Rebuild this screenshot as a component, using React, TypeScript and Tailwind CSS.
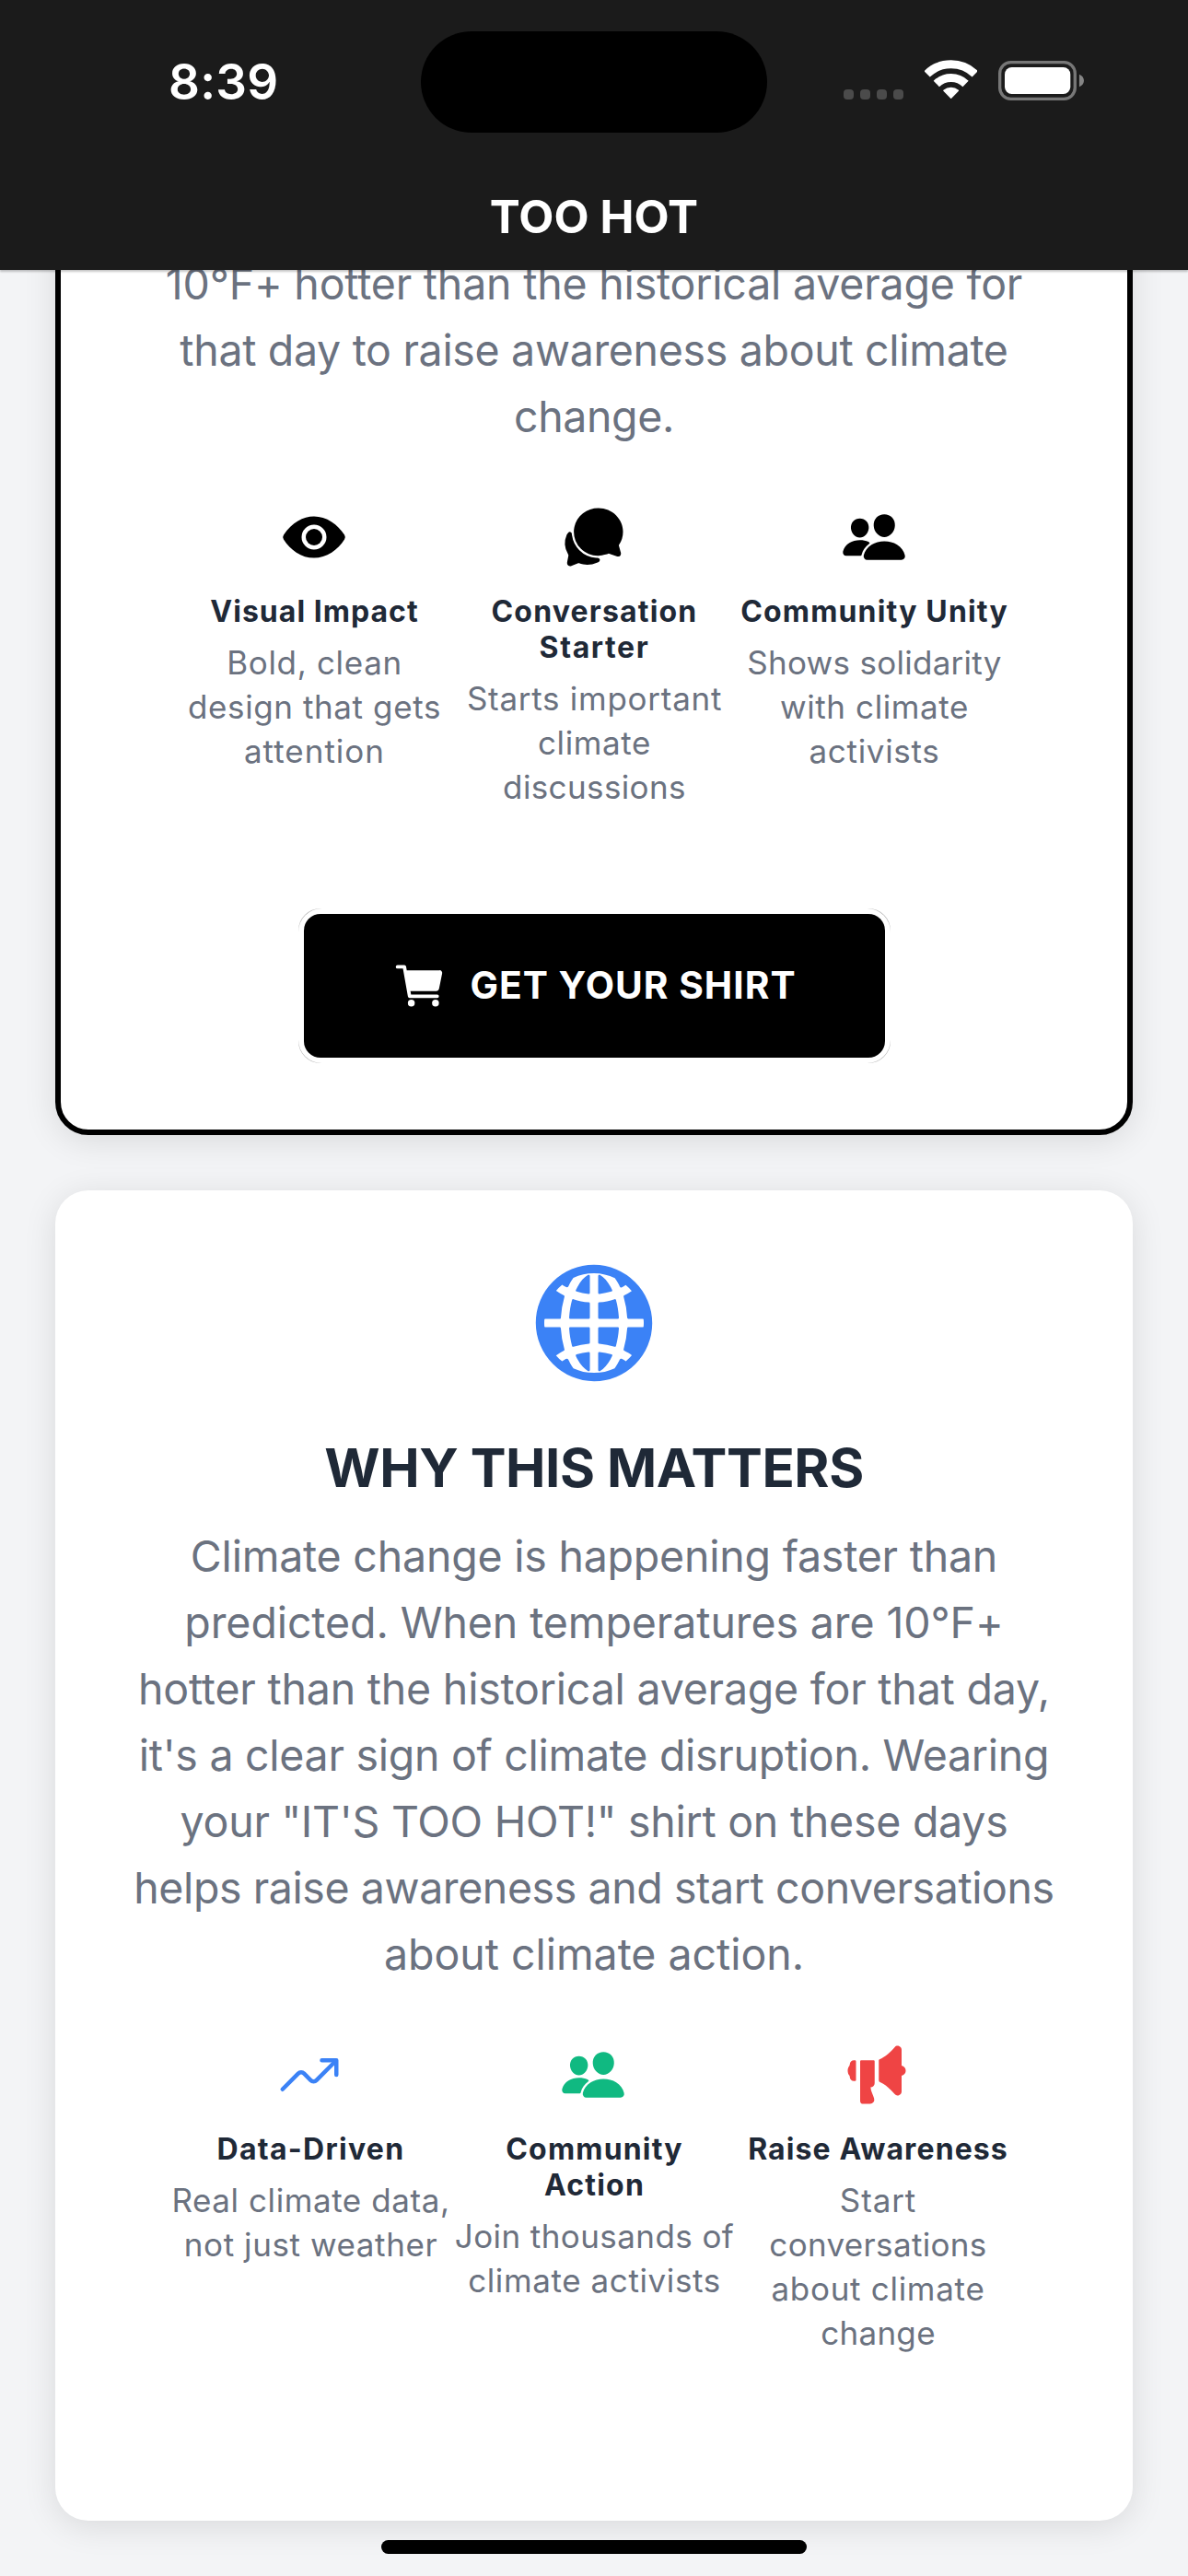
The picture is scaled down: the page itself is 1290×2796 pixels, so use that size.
import type { ReactNode } from "react";
import type { IconType } from "react-icons";
import {
  IoCart,
  IoChatbubbles,
  IoEye,
  IoGlobe,
  IoMegaphone,
  IoPeople,
  IoTrendingUp,
} from "react-icons/io5";

type Line = { text: string; tracking: string };

type Feature = {
  icon: IconType;
  color: string;
  title: Line[];
  body: Line[];
};

const shirtCopy: Line[] = [
  { text: "10°F+ hotter than the historical average for", tracking: "tracking-[-0.2px]" },
  { text: "that day to raise awareness about climate", tracking: "tracking-[-0.32px]" },
  { text: "change.", tracking: "tracking-[-0.38px]" },
];

const mattersCopy: Line[] = [
  { text: "Climate change is happening faster than", tracking: "tracking-[-0.22px]" },
  { text: "predicted. When temperatures are 10°F+", tracking: "tracking-[-0.1px]" },
  { text: "hotter than the historical average for that day,", tracking: "tracking-[-0.21px]" },
  { text: "it's a clear sign of climate disruption. Wearing", tracking: "tracking-[-0.28px]" },
  { text: "your \"IT'S TOO HOT!\" shirt on these days", tracking: "tracking-[-0.26px]" },
  { text: "helps raise awareness and start conversations", tracking: "tracking-[-0.42px]" },
  { text: "about climate action.", tracking: "tracking-[-0.05px]" },
];

const shirtFeatures: Feature[] = [
  {
    icon: IoEye,
    color: "text-black",
    title: [{ text: "Visual Impact", tracking: "tracking-[1.03px]" }],
    body: [
      { text: "Bold, clean", tracking: "tracking-[0.67px]" },
      { text: "design that gets", tracking: "tracking-[0.6px]" },
      { text: "attention", tracking: "tracking-[1px]" },
    ],
  },
  {
    icon: IoChatbubbles,
    color: "text-black",
    title: [
      { text: "Conversation", tracking: "tracking-[1.18px]" },
      { text: "Starter", tracking: "tracking-[1.6px]" },
    ],
    body: [
      { text: "Starts important", tracking: "tracking-[0.73px]" },
      { text: "climate", tracking: "tracking-[0.6px]" },
      { text: "discussions", tracking: "tracking-[0.38px]" },
    ],
  },
  {
    icon: IoPeople,
    color: "text-black",
    title: [{ text: "Community Unity", tracking: "tracking-[1.17px]" }],
    body: [
      { text: "Shows solidarity", tracking: "tracking-[0.28px]" },
      { text: "with climate", tracking: "tracking-[0.6px]" },
      { text: "activists", tracking: "tracking-[0.7px]" },
    ],
  },
];

const mattersFeatures: Feature[] = [
  {
    icon: IoTrendingUp,
    color: "text-[#3b82f6]",
    title: [{ text: "Data-Driven", tracking: "tracking-[1.28px]" }],
    body: [
      { text: "Real climate data,", tracking: "tracking-[0.58px]" },
      { text: "not just weather", tracking: "tracking-[0.58px]" },
    ],
  },
  {
    icon: IoPeople,
    color: "text-[#10b981]",
    title: [
      { text: "Community", tracking: "tracking-[1.17px]" },
      { text: "Action", tracking: "tracking-[1.2px]" },
    ],
    body: [
      { text: "Join thousands of", tracking: "tracking-[0.42px]" },
      { text: "climate activists", tracking: "tracking-[0.6px]" },
    ],
  },
  {
    icon: IoMegaphone,
    color: "text-[#ef4444]",
    title: [{ text: "Raise Awareness", tracking: "tracking-[1.1px]" }],
    body: [
      { text: "Start", tracking: "tracking-[0.89px]" },
      { text: "conversations", tracking: "tracking-[0.34px]" },
      { text: "about climate", tracking: "tracking-[0.71px]" },
      { text: "change", tracking: "tracking-[0.3px]" },
    ],
  },
];

function Lines({ lines }: { lines: Line[] }) {
  return (
    <>
      {lines.map((line) => (
        <span key={line.text} className={`block whitespace-nowrap ${line.tracking}`}>
          {line.text}
        </span>
      ))}
    </>
  );
}

function Paragraph({ children, className }: { children: ReactNode; className: string }) {
  return (
    <p className={`text-center text-[46.5px] leading-[72px] text-[#6b7280] ${className}`}>
      {children}
    </p>
  );
}

function FeatureColumn({ feature, iconMargin }: { feature: Feature; iconMargin: string }) {
  const Icon = feature.icon;
  return (
    <div className="flex flex-col items-center text-center">
      <Icon className={`size-[72px] ${iconMargin} ${feature.color}`} />
      <h3 className="mt-[25px] pl-px text-[32px] leading-[39px] font-bold text-[#1f2937]">
        <Lines lines={feature.title} />
      </h3>
      <p className="mt-3 pl-px text-[35px] leading-[48px] text-[#6b7280]">
        <Lines lines={feature.body} />
      </p>
    </div>
  );
}

function SignalDots() {
  return (
    <div className="mb-px flex gap-[7px]">
      {[0, 1, 2, 3].map((dot) => (
        <span key={dot} className="size-[11px] rounded-[4px] bg-[#4b4b4b]" />
      ))}
    </div>
  );
}

function WifiIcon() {
  return (
    <svg viewBox="371 74 173 128" className="mb-px h-[42.7px] w-[57.7px]" fill="none">
      <path
        d="M378.8 120.1A112.5 112.5 0 0 1 535.2 120.1M409.4 151.7A68.5 68.5 0 0 1 504.6 151.7"
        stroke="#fff"
        strokeWidth="27"
      />
      <path
        d="M457 198L433.5 173.5A38 38 0 0 1 480.5 173.5Z"
        fill="#fff"
        stroke="#fff"
        strokeWidth="4"
        strokeLinejoin="round"
      />
    </svg>
  );
}

function BatteryIcon() {
  return (
    <svg viewBox="612 75 280 129" className="h-[43px] w-[93.3px]" fill="none">
      <rect x="617" y="80" width="245" height="119" rx="36" stroke="#777" strokeWidth="10" />
      <rect x="633" y="96" width="214" height="87" rx="23" fill="#fff" />
      <path d="M876 119C886 123 891 131 891 139.500S886 156 876 160Z" fill="#858585" />
    </svg>
  );
}

function Header() {
  return (
    <header className="relative z-10 h-[293px] bg-[#1b1b1b] text-white shadow-[0_2px_2px_rgba(0,0,0,0.22)]">
      <div className="flex h-[178px] items-center">
        <div className="w-[457px] pl-[183px] text-[53px] leading-[60px] font-semibold tracking-[0.2px]">
          8:39
        </div>
        <div className="h-[110px] w-[376px] rounded-full bg-black" />
        <div className="flex items-end pl-[83px] pb-[4px]">
          <SignalDots />
          <div className="ml-[22.7px] flex items-end">
            <WifiIcon />
            <div className="ml-[22.6px]">
              <BatteryIcon />
            </div>
          </div>
        </div>
      </div>
      <h1 className="mt-[27px] text-center text-[49.5px] leading-[60px] font-bold tracking-[0.05px]">
        TOO HOT
      </h1>
    </header>
  );
}

function ShirtCard() {
  return (
    <section className="-mt-[60px] h-[999px] rounded-[36px] border-[6px] border-black bg-white pt-[33px] shadow-[0_6px_36px_rgba(0,0,0,0.11)]">
      <Paragraph className="">
        <Lines lines={shirtCopy} />
      </Paragraph>
      <div className="mx-auto mt-[59px] grid w-[912px] grid-cols-3">
        {shirtFeatures.map((feature) => (
          <FeatureColumn key={feature.title[0].text} feature={feature} iconMargin="mr-0" />
        ))}
      </div>
      <div className="mx-auto mt-[108px] h-[168px] w-[643px] rounded-[24px] bg-[#b8b8b8]">
        <div className="h-full rounded-[25.5px] bg-white p-[6px]">
          <button className="flex h-full w-full items-center rounded-[18px] bg-black pl-[96px] text-white">
            <IoCart className="size-[60px]" />
            <span className="ml-[25px] text-[40.7px] font-bold tracking-[1.02px] whitespace-nowrap">
              GET YOUR SHIRT
            </span>
          </button>
        </div>
      </div>
    </section>
  );
}

function MattersCard() {
  return (
    <section className="mt-[60px] flex h-[1444px] flex-col items-center rounded-[36px] bg-white pt-[72px] shadow-[0_6px_36px_rgba(0,0,0,0.11)]">
      <IoGlobe className="size-[144px] text-[#3b82f6]" />
      <h2 className="mt-[49px] text-[58.2px] leading-[72px] font-bold tracking-[-0.43px] text-[#1f2937]">
        WHY THIS MATTERS
      </h2>
      <Paragraph className="mt-6">
        <Lines lines={mattersCopy} />
      </Paragraph>
      <div className="mt-[59px] grid w-[924px] grid-cols-3">
        {mattersFeatures.map((feature) => (
          <FeatureColumn key={feature.title[0].text} feature={feature} iconMargin="mr-[3px]" />
        ))}
      </div>
    </section>
  );
}

export default function App() {
  return (
    <div className="relative flex h-[2796px] w-[1290px] flex-col overflow-hidden bg-[#f3f4f6] font-['Inter',sans-serif]">
      <Header />
      <main className="flex-1 px-[60px]">
        <ShirtCard />
        <MattersCard />
      </main>
      <div className="absolute bottom-[24px] left-[414px] h-[15px] w-[462px] rounded-full bg-black" />
    </div>
  );
}
